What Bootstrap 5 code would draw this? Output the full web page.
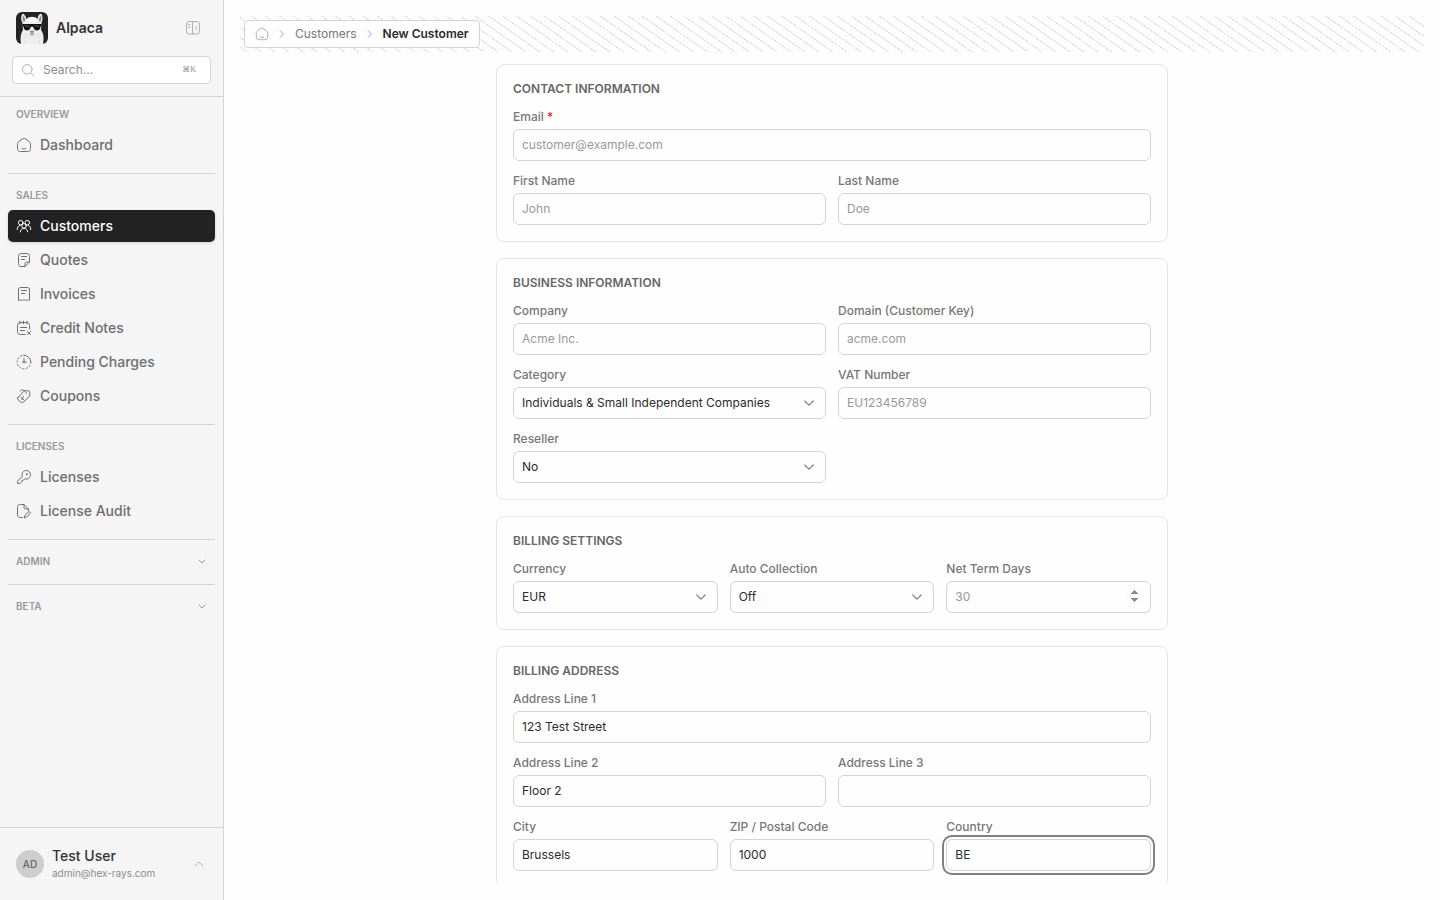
<!DOCTYPE html>
<html lang="en">
<head>
<meta charset="utf-8">
<meta name="viewport" content="width=device-width, initial-scale=1">
<title>New Customer · Alpaca</title>
<link href="https://cdn.jsdelivr.net/npm/bootstrap@5.3.0/dist/css/bootstrap.min.css" rel="stylesheet">
<style>
  :root { --line: #d4d4d4; --muted: #999; --ink: #2b2b2b; }
  body { font-family: Inter, "Liberation Sans", sans-serif; font-size: 12px; line-height: 16px; color: var(--ink); background: #fefefe; }
  svg { display: block; fill: none; stroke: currentColor; stroke-width: 1; stroke-linecap: round; stroke-linejoin: round; }

  /* Sidebar */
  .side { width: 224px; background: #f5f5f5; border-right: 1px solid var(--line); }
  .side-head { border-bottom: 1px solid var(--line); padding: 12px; }
  .brand { font-size: 14px; font-weight: 600; color: #333; }
  .icon-btn { color: #b0b0b0; }
  .search { height: 28px; border: 1px solid var(--line); border-radius: 4px; background: #fff; color: #b0b0b0; padding: 0 14px 0 8px; margin-top: 12px; }
  .search input { min-width: 0; outline: 0; color: var(--ink); }
  .search input::placeholder { color: #8c8c8c; opacity: 1; }
  .search kbd { background: none; color: #8c8c8c; padding: 0; font: 8px/12px "Liberation Serif", "DejaVu Sans", serif; }
  .side-nav { padding: 2px 8px; }
  .group { padding-bottom: 12px; }
  .group + .group { border-top: 1px solid var(--line); padding-top: 6px; }
  .group-fold { padding-bottom: 8px; }
  .group-title { font-size: 10px; font-weight: 600; line-height: 16px; padding: 7px 8px; margin: 0; color: #999; text-transform: uppercase; }
  .nav-list { gap: 2px; }
  .nav-list .nav-link { display: flex; align-items: center; gap: 8px; height: 32px; padding: 0 8px; border-radius: 5px; font-size: 14px; font-weight: 500; color: #6e6e6e; }
  .nav-list .nav-link.active { background: #222; color: #fff; box-shadow: 0 1px 3px rgba(0,0,0,.15); }
  .user { border-top: 1px solid var(--line); height: 73px; padding: 0 16px; }
  .avatar { width: 28px; height: 28px; border-radius: 50%; background: #cdcdcd; color: #666; font-size: 10px; font-weight: 500; }
  .user-text { padding-bottom: 2px; }
  .user-name { font-size: 14px; font-weight: 500; line-height: 20px; color: #333; }
  .user-mail { font-size: 10px; line-height: 14px; color: #8c8c8c; }

  /* Page */
  .page { padding: 16px; }
  .strip { padding: 4px; margin-bottom: 12px; background: repeating-linear-gradient(215deg, #e2e2e2 0 1px, transparent 1px 8px); }
  .crumbs { height: 28px; border: 1px solid var(--line); border-radius: 4px; background: #fefefe; padding: 0 10px; gap: 6px; }
  .crumbs a { color: #777; text-decoration: none; }
  .crumbs .now { font-weight: 600; color: var(--ink); }
  .crumbs .sep { color: #a6a6a6; }
  .scroller { overflow-y: auto; scrollbar-width: none; min-height: 0; }
  .scroller::-webkit-scrollbar { display: none; }
  .form-col { max-width: 672px; gap: 16px; }
  .panel { border: 1px solid #e5e5e5; border-radius: 8px; padding: 16px; }
  .panel-title { font-size: 12px; line-height: 16px; font-weight: 600; color: #666; text-transform: uppercase; margin: 0 0 12px; }
  .panel .row { --bs-gutter-x: 12px; --bs-gutter-y: 12px; }
  .panel .form-label { display: block; font-weight: 500; color: #777; margin: 0 0 4px; line-height: 16px; }
  .panel .form-control, .panel .form-select { height: 32px; font-size: 12px; line-height: 16px; padding: 0 8px; border: 1px solid var(--line); border-radius: 6px; color: var(--ink); background-color: #fefefe; }
  .panel .form-control { padding-bottom: 2px; }
  .panel .form-control::placeholder { color: var(--muted); opacity: 1; }
  .panel .form-select { background-image: url("data:image/svg+xml,%3Csvg xmlns='http://www.w3.org/2000/svg' viewBox='0 0 16 16' fill='none' stroke='%23808080' stroke-width='1.2' stroke-linecap='round' stroke-linejoin='round'%3E%3Cpath d='M3.800 6 8 10.200 12.200 6'/%3E%3C/svg%3E"); background-size: 16px; background-position: right 8px center; }
  .panel input[type=number]::-webkit-inner-spin-button { opacity: 1; background: #efefef; }
  .panel .form-control:focus, .panel .form-control.ring { outline: 2px solid #808080; outline-offset: 2px; box-shadow: none; }
  .req { color: #ef2020; }
</style>
</head>
<body>
<div class="d-flex vh-100 overflow-hidden">
  <aside class="side d-flex flex-column flex-shrink-0">
    <div class="side-head">
      <div class="d-flex align-items-center px-1">
        <svg width="32" height="32" viewBox="0 0 32 32" style="stroke:none" aria-hidden="true">
          <rect width="32" height="32" rx="6" fill="#242424"/>
          <path d="M5 32C4 25 5 21 7 18L6.500 11C4.500 7 5 3 7 1.500 9 3 10 5 10.500 7 13 4 19 4 21.500 7 22 4 23 2 25 1.500 27 4 27 8 25.500 11L25 18C28 22 28 27 27 32Z" fill="#eee"/>
          <path d="M7 3.500C6.300 6 6.700 8 7.800 10L9.200 8.500C9 6.500 8.300 5 7 3.500ZM25 3.500C25.700 6 25.300 8 24.200 10L22.800 8.500C23 6.500 23.700 5 25 3.500Z" fill="#888"/>
          <path d="M11 7 13 5.500 14 7.500 16 5 18 7.500 19 5.500 21 7 20 10H12Z" fill="#fff"/>
          <path d="M6.500 12H25.500V14L24.500 14.500C24.500 19.500 18 20 17.300 14.800H14.700C14 20 7.500 19.500 7.500 14.500L6.500 14Z" fill="#111"/>
          <path d="M9 13.500 13 14.500M19 13.500 23 14.500" style="stroke:#777;stroke-width:.7"/>
          <path d="M13.500 19.500C14.500 18.300 17.500 18.300 18.500 19.500L17 21.300H15Z" fill="#999"/>
          <path d="M16 20V22M14 22.500C15 23 17 23 18 22.500" style="stroke:#777;stroke-width:.8"/>
          <path d="M9 22 9.500 25M22.500 22 22 25M8 28 8.500 31M23.500 28 23 31" style="stroke:#d4d4d4;stroke-width:.8"/>
        </svg>
        <span class="brand ms-2">Alpaca</span>
        <button class="btn border-0 p-0 icon-btn ms-auto me-1" type="button" aria-label="Collapse sidebar">
          <svg width="20" height="20" viewBox="0 0 20 20"><rect x="3.500" y="3.500" width="13" height="12.500" rx="2.500"/><path d="M9.500 3.500V16M5.500 6.500H7M5.500 9H7M13.700 8.300 12.200 9.800 13.700 11.300"/></svg>
        </button>
      </div>
      <label class="search d-flex align-items-center">
        <svg width="14" height="14" viewBox="0 0 14 14" class="flex-shrink-0 me-2"><circle cx="6.300" cy="6.300" r="4.800"/><path d="M10 10 12.700 12.700"/></svg>
        <input class="border-0 bg-transparent p-0 flex-grow-1" type="text" placeholder="Search..." aria-label="Search">
        <kbd>⌘K</kbd>
      </label>
    </div>

    <nav class="side-nav flex-grow-1 overflow-hidden">
      <section class="group">
        <h2 class="group-title">Overview</h2>
        <div class="nav flex-column nav-list">
          <a class="nav-link" href="#"><svg width="16" height="16" viewBox="0 0 16 16"><path d="M1.500 7C1.500 5.800 2 5 3 4.300L6.300 2C7.400 1.200 8.600 1.200 9.700 2L13 4.300C14 5 14.500 5.800 14.500 7V11.500C14.500 13.500 13.500 14.500 11.500 14.500H4.500C2.500 14.500 1.500 13.500 1.500 11.500ZM6 11.500C7 12.200 9 12.200 10 11.500"/></svg>Dashboard</a>
        </div>
      </section>
      <section class="group">
        <h2 class="group-title">Sales</h2>
        <div class="nav flex-column nav-list">
          <a class="nav-link active" href="#" aria-current="page"><svg width="16" height="16" viewBox="0 0 16 16"><circle cx="4.700" cy="4.700" r="2.300"/><circle cx="11.300" cy="4.700" r="2.300"/><circle cx="8" cy="7.900" r="2.300"/><path d="M1.200 11.500C1.200 9.500 2 7.800 4 7.300M14.800 11.500C14.800 9.500 14 7.800 12 7.300M4.300 13.800C4.500 11.700 6 10.300 8 10.300S11.500 11.700 11.700 13.800"/></svg>Customers</a>
          <a class="nav-link" href="#"><svg width="16" height="16" viewBox="0 0 16 16"><path d="M9 14.500H5C3 14.500 2.500 13.500 2.500 11.500V4.500C2.500 2.500 3.300 1.500 5.300 1.500H10.700C12.700 1.500 13.500 2.500 13.500 4.500V10L9 14.500V12C9 10.500 9.500 10 11 10H13.500M5.500 4.500H10.500M5.500 7.500H8.500"/></svg>Quotes</a>
          <a class="nav-link" href="#"><svg width="16" height="16" viewBox="0 0 16 16"><path d="M2.500 14V4C2.500 2.300 3.300 1.500 5 1.500H11C12.700 1.500 13.500 2.300 13.500 4V14C12.500 15 11.500 13.500 10.500 14.300 9.500 15 9 13.500 8 13.500S6.500 15 5.500 14.300C4.500 13.500 3.500 15 2.500 14ZM5.500 4.500H10.500M5.500 7.500H8.500"/></svg>Invoices</a>
          <a class="nav-link" href="#"><svg width="16" height="16" viewBox="0 0 16 16"><path d="M9 14.500H4.500C2.500 14.500 1.500 13.500 1.500 11.500V5.500C1.500 3.500 2.500 2.500 4.500 2.500H10.500C12.500 2.500 13.500 3.500 13.500 5.500V9M4 1.200V3.800M7.500 1.200V3.800M11 1.200V3.800M4.500 7.500H10.500M4.500 10.500H8.500M11.500 11.500 14.500 14.500M14.500 11.500 11.500 14.500"/></svg>Credit Notes</a>
          <a class="nav-link" href="#"><svg width="16" height="16" viewBox="0 0 16 16"><path d="M8 1.200A6.800 6.800 0 0 1 14.800 8"/><path d="M14.800 8A6.800 6.800 0 1 1 8 1.200" stroke-dasharray="1.300 2.200"/><path d="M8 4.500V9M6.500 8H10.500"/></svg>Pending Charges</a>
          <a class="nav-link" href="#"><svg width="16" height="16" viewBox="0 0 16 16"><path d="M2 9.500 7.500 3.500C8 3 8.800 2.700 9.500 2.700L12.500 2.800C13.300 2.800 13.700 3.300 13.700 4L13.800 7C13.800 7.700 13.500 8.300 13 8.800L7.500 14C6.500 15 5.500 14.800 4.700 14L2.200 12C1.400 11.300 1.300 10.300 2 9.500ZM5 9.500 8 12M7.500 8.500 6 11.500M4 3C6 1 8.500 1.500 10.500 5.500"/></svg>Coupons</a>
        </div>
      </section>
      <section class="group">
        <h2 class="group-title">Licenses</h2>
        <div class="nav flex-column nav-list">
          <a class="nav-link" href="#"><svg width="16" height="16" viewBox="0 0 16 16"><path d="M6.200 7.200C5.300 4 7.300 1.500 10.200 1.500 12.700 1.500 14.500 3.300 14.500 5.800 14.500 8.700 12 10.700 8.800 9.800L7.500 11.200H6V12.700L4.500 14.200C4 14.500 3.500 14.500 3 14.500H1.500V12.500C1.500 12 1.700 11.700 2 11.400Z"/><circle cx="10.800" cy="5.200" r=".5"/></svg>Licenses</a>
          <a class="nav-link" href="#"><svg width="16" height="16" viewBox="0 0 16 16"><path d="M6.500 14.500H4.500C2.500 14.500 1.500 13.500 1.500 11.500V4.500C1.500 2.500 2.500 1.500 4.500 1.500H8L12.500 6V7.500M8 1.500V4C8 5.500 8.500 6 10 6H12.500M8.500 14.500 9 12.300 12.500 8.800C13.500 8 15 9.500 14.200 10.500L10.700 14Z"/></svg>License Audit</a>
        </div>
      </section>
      <section class="group group-fold">
        <button type="button" class="group-title btn border-0 w-100 d-flex justify-content-between align-items-center">Admin<svg width="10" height="10" viewBox="0 0 10 10"><path d="M2 4 5 7 8 4"/></svg></button>
      </section>
      <section class="group group-fold">
        <button type="button" class="group-title btn border-0 w-100 d-flex justify-content-between align-items-center">Beta<svg width="10" height="10" viewBox="0 0 10 10"><path d="M2 4 5 7 8 4"/></svg></button>
      </section>
    </nav>

    <div class="user d-flex align-items-center gap-2">
      <span class="avatar d-flex align-items-center justify-content-center flex-shrink-0">AD</span>
      <div class="user-text">
        <div class="user-name">Test User</div>
        <div class="user-mail">admin@hex-rays.com</div>
      </div>
      <button class="btn border-0 p-0 icon-btn ms-auto" type="button" aria-label="Account menu"><svg width="16" height="16" viewBox="0 0 16 16"><path d="M4 10 8 6 12 10"/></svg></button>
    </div>
  </aside>

  <main class="page d-flex flex-column flex-grow-1">
    <div class="strip d-flex flex-shrink-0">
      <nav class="crumbs d-flex align-items-center" aria-label="Breadcrumb">
        <a href="#" aria-label="Home" class="sep"><svg width="14" height="14" viewBox="0 0 16 16"><path d="M1.500 7C1.500 5.800 2 5 3 4.300L6.300 2C7.400 1.200 8.600 1.200 9.700 2L13 4.300C14 5 14.500 5.800 14.500 7V11.500C14.500 13.500 13.500 14.500 11.500 14.500H4.500C2.500 14.500 1.500 13.500 1.500 11.500ZM6 11.500C7 12.200 9 12.200 10 11.500"/></svg></a>
        <svg class="sep" width="14" height="14" viewBox="0 0 14 14"><path d="M5 3.500 8.500 7 5 10.500"/></svg>
        <a href="#">Customers</a>
        <svg class="sep" width="14" height="14" viewBox="0 0 14 14"><path d="M5 3.500 8.500 7 5 10.500"/></svg>
        <span class="now" aria-current="page">New Customer</span>
      </nav>
    </div>

    <div class="scroller flex-grow-1">
      <form class="form-col d-flex flex-column mx-auto">
        <section class="panel">
          <h2 class="panel-title">Contact Information</h2>
          <div class="row">
            <div class="col-12"><label class="form-label" for="email">Email <span class="req">*</span></label><input class="form-control" id="email" type="email" placeholder="customer@example.com"></div>
            <div class="col-6"><label class="form-label" for="first">First Name</label><input class="form-control" id="first" type="text" placeholder="John"></div>
            <div class="col-6"><label class="form-label" for="last">Last Name</label><input class="form-control" id="last" type="text" placeholder="Doe"></div>
          </div>
        </section>

        <section class="panel">
          <h2 class="panel-title">Business Information</h2>
          <div class="row">
            <div class="col-6"><label class="form-label" for="company">Company</label><input class="form-control" id="company" type="text" placeholder="Acme Inc."></div>
            <div class="col-6"><label class="form-label" for="domain">Domain (Customer Key)</label><input class="form-control" id="domain" type="text" placeholder="acme.com"></div>
            <div class="col-6"><label class="form-label" for="category">Category</label><select class="form-select" id="category"><option>Individuals &amp; Small Independent Companies</option></select></div>
            <div class="col-6"><label class="form-label" for="vat">VAT Number</label><input class="form-control" id="vat" type="text" placeholder="EU123456789"></div>
            <div class="col-6"><label class="form-label" for="reseller">Reseller</label><select class="form-select" id="reseller"><option>No</option><option>Yes</option></select></div>
          </div>
        </section>

        <section class="panel">
          <h2 class="panel-title">Billing Settings</h2>
          <div class="row">
            <div class="col-4"><label class="form-label" for="currency">Currency</label><select class="form-select" id="currency"><option>EUR</option><option>USD</option></select></div>
            <div class="col-4"><label class="form-label" for="auto">Auto Collection</label><select class="form-select" id="auto"><option>Off</option><option>On</option></select></div>
            <div class="col-4"><label class="form-label" for="terms">Net Term Days</label><input class="form-control" id="terms" type="number" placeholder="30"></div>
          </div>
        </section>

        <section class="panel">
          <h2 class="panel-title">Billing Address</h2>
          <div class="row">
            <div class="col-12"><label class="form-label" for="line1">Address Line 1</label><input class="form-control" id="line1" type="text" value="123 Test Street"></div>
            <div class="col-6"><label class="form-label" for="line2">Address Line 2</label><input class="form-control" id="line2" type="text" value="Floor 2"></div>
            <div class="col-6"><label class="form-label" for="line3">Address Line 3</label><input class="form-control" id="line3" type="text"></div>
            <div class="col-4"><label class="form-label" for="city">City</label><input class="form-control" id="city" type="text" value="Brussels"></div>
            <div class="col-4"><label class="form-label" for="zip">ZIP / Postal Code</label><input class="form-control" id="zip" type="text" value="1000"></div>
            <div class="col-4"><label class="form-label" for="country">Country</label><input class="form-control ring" id="country" type="text" value="BE"></div>
          </div>
        </section>
      </form>
    </div>
  </main>
</div>
<script src="https://cdn.jsdelivr.net/npm/bootstrap@5.3.0/dist/js/bootstrap.bundle.min.js"></script>
</body>
</html>
